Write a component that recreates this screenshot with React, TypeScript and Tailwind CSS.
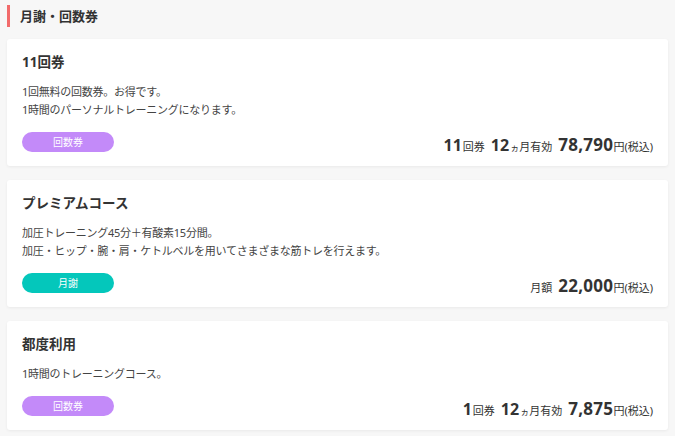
const plans = [
  {
    id: "ticket11",
    title: "11回券",
    lines: ["1回無料の回数券。お得です。", "1時間のパーソナルトレーニングになります。"],
    badge: "回数券",
    kind: "ticket",
    count: "11",
    price: "78,790",
  },
  {
    id: "premium",
    title: "プレミアムコース",
    lines: ["加圧トレーニング45分＋有酸素15分間。", "加圧・ヒップ・腕・肩・ケトルベルを用いてさまざまな筋トレを行えます。"],
    badge: "月謝",
    kind: "monthly",
    price: "22,000",
  },
  {
    id: "single",
    title: "都度利用",
    lines: ["1時間のトレーニングコース。"],
    badge: "回数券",
    kind: "ticket",
    count: "1",
    price: "7,875",
  },
];

export default function App() {
  return (
    <div className="min-h-screen bg-[#f7f7f7] px-[7px] pt-[5px] text-[#333] font-['Noto_Sans','Noto_Sans_CJK_JP',sans-serif]">
      {/* Section heading */}
      <div className="flex items-center h-[22px] border-l-[3px] border-[#f26b6b] pl-[10px]">
        <h2 className="text-[13px] font-bold leading-none">月謝・回数券</h2>
      </div>

      <div className="mt-[12px] flex flex-col gap-[14px]">
        {plans.map((plan) => (
          <div
            key={plan.id}
            className="bg-white rounded-[3px] shadow-[0_1px_3px_rgba(0,0,0,0.06)] px-[15px] pt-[13px] pb-[14px]"
          >
            <h3 className="text-[13.5px] font-bold leading-[20px] text-[#333]">{plan.title}</h3>
            <div className="mt-[11px] text-[11px] leading-[18px] tracking-[-0.25px] text-[#444]">
              {plan.lines.map((line) => (
                <p key={line}>{line}</p>
              ))}
            </div>
            <div className="mt-[13px] flex items-end justify-between">
              <span
                className={`flex items-center justify-center w-[92px] h-[20px] rounded-full text-[10px] text-white ${
                  plan.kind === "ticket" ? "bg-[#c38af9]" : "bg-[#04c7bb]"
                }`}
              >
                {plan.badge}
              </span>
              <div className="flex items-baseline text-[#333] leading-none -mb-[1px]">
                {plan.kind === "ticket" ? (
                  <>
                    <span className="font-['Open_Sans',sans-serif] text-[16px] font-bold">{plan.count}</span>
                    <span className="text-[11px] ml-[1px]">回券</span>
                    <span className="font-['Open_Sans',sans-serif] text-[16px] font-bold ml-[6px]">12</span>
                    <span className="text-[9px] ml-[1px]">ヵ</span>
                    <span className="text-[11px]">月有効</span>
                  </>
                ) : (
                  <span className="text-[11px]">月額</span>
                )}
                <span className="font-['Open_Sans',sans-serif] text-[17px] font-bold tracking-[0.3px] ml-[6px]">{plan.price}</span>
                <span className="text-[11px]">円(税込)</span>
              </div>
            </div>
          </div>
        ))}
      </div>
    </div>
  );
}
